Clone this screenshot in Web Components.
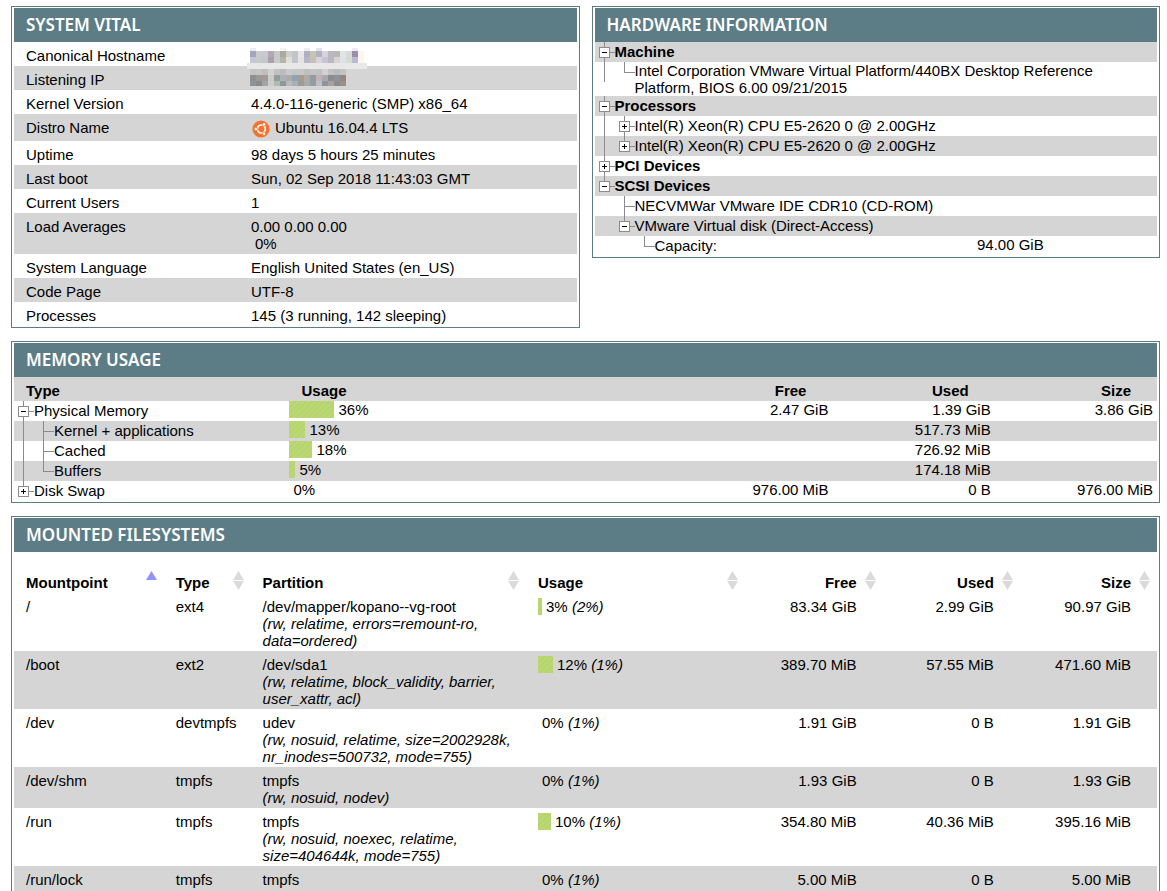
<!DOCTYPE html>
<html lang="en">
<head>
<meta charset="utf-8">
<title>System information</title>
<style>
  body {
    margin: 0;
    background: #fff;
    color: #000;
    font: 15px/17px "Liberation Sans", Arial, sans-serif;
  }
</style>
</head>
<body>
<sys-page></sys-page>

<script>
const baseStyle = `
  :host { display: block; }
  table { width: 100%; border-collapse: collapse; table-layout: fixed; }
  th, td { padding: 0; text-align: left; vertical-align: top; font-weight: normal; }
  .num { text-align: right; }
  .shade { background: #d5d5d5; }
`;

class SysPage extends HTMLElement {
  constructor() {
    super();
    this.attachShadow({mode: "open"});
    this.shadowRoot.innerHTML = `
      <style>
        :host {
          display: flex;
          flex-direction: column;
          gap: 13px;
          padding: 6px 7px 0 11px;
        }
        .top {
          display: grid;
          grid-template-columns: 1fr 1fr;
          gap: 12px;
          align-items: start;
        }
      </style>
      <div class="top">
        <info-panel><span slot="title">SYSTEM VITAL</span><vital-table></vital-table></info-panel>
        <info-panel><span slot="title">HARDWARE INFORMATION</span><hardware-table></hardware-table></info-panel>
      </div>
      <info-panel><span slot="title">MEMORY USAGE</span><memory-table></memory-table></info-panel>
      <info-panel><span slot="title">MOUNTED FILESYSTEMS</span><filesystem-table></filesystem-table></info-panel>
    `;
  }
}

class InfoPanel extends HTMLElement {
  constructor() {
    super();
    this.attachShadow({mode: "open"});
    this.shadowRoot.innerHTML = `
      <style>
        :host {
          display: block;
          border: 1px solid #5c7d86;
          padding: 1px 2px;
        }
        h2 {
          margin: 0;
          padding: 0 12px;
          background: #5c7d86;
          color: #fff;
          font: 600 17px/34px "Trebuchet MS", "Noto Sans", sans-serif;
        }
      </style>
      <h2><slot name="title"></slot></h2>
      <slot></slot>
    `;
  }
}

// Bar is 1.25px per percent, the label follows after a space
class UsageBar extends HTMLElement {
  constructor() {
    super();
    this.attachShadow({mode: "open"});
  }
  connectedCallback() {
    const value = Number(this.getAttribute("value"));
    this.shadowRoot.innerHTML = `
      <style>
        :host { display: flex; gap: 4px; }
        .bar {
          width: ${Math.round(value * 1.25)}px;
          height: 17px;
          background: repeating-linear-gradient(135deg, #b7d56e 0 2px, #bbd875 2px 4px);
        }
      </style>
      <div class="bar"></div>
      <div>${value}% <slot></slot></div>
    `;
  }
}

// One 20px step of the tree: line, blank, tee, end, open, shut, shut-last, open-last
class TreeStep extends HTMLElement {
  constructor() {
    super();
    this.attachShadow({mode: "open"});
  }
  connectedCallback() {
    const kind = this.getAttribute("kind");
    const last = kind.endsWith("-last") || kind === "end";
    const toggle = kind.startsWith("open") || kind.startsWith("shut");
    let lines = "";
    if (kind !== "blank") {
      lines += `<path d="M9.5 0V${last ? 10 : 20}"/>`;
    }
    if (kind !== "blank" && kind !== "line") {
      lines += `<path d="M9 10.5H20"/>`;
    }
    let box = "";
    if (toggle) {
      box = `<rect x="4.5" y="5.5" width="10" height="10" fill="#fff"/>
        <path stroke="#000" d="M7 10.5H12${kind.startsWith("shut") ? "M9.5 8V13" : ""}"/>`;
    }
    const svg = `<svg width="20" height="20" fill="none" stroke="#8c8c8c" aria-hidden="true">${lines}${box}</svg>`;
    this.shadowRoot.innerHTML = `
      <style>
        :host { display: block; flex: none; width: 20px; height: 20px; }
        svg { display: block; }
        button { display: block; margin: 0; padding: 0; border: 0; background: none; cursor: pointer; }
      </style>
      ${toggle ? `<button type="button" aria-label="${kind.startsWith("shut") ? "Expand" : "Collapse"}">${svg}</button>` : svg}
    `;
  }
}

class TreeLabel extends HTMLElement {
  constructor() {
    super();
    this.attachShadow({mode: "open"});
  }
  connectedCallback() {
    const steps = this.getAttribute("steps").split(" ");
    this.shadowRoot.innerHTML = `
      <style>
        :host { display: flex; align-items: flex-start; min-height: 20px; padding-right: 8px; }
        .text { display: flex; align-items: center; min-height: 19px; }
      </style>
      ${steps.map(kind => `<tree-step kind="${kind}"></tree-step>`).join("")}
      <div class="text"><slot></slot></div>
    `;
  }
}

// Mosaic that hides private values, 6px cells
class PixelMask extends HTMLElement {
  constructor() {
    super();
    this.attachShadow({mode: "open"});
  }
  connectedCallback() {
    const rows = {
      host: [
        [1, 3, "e9ebef - - - - f4f4f4 - - - ececf3 - e0e2e6 - - - - - eeeaf4"],
        [4, 6, "a3a5b8 cbcbcb c7c9ce b5a7b4 c8cac5 a9a9a0 cfcfca c1c5cb eae5e1 b0b0c4 c9c3b6 b0b4c0 d7d2dc bab6c2 bab7ae dfe5e9 d9dbd9 9c8fab fdf6ef"],
        [10, 6, "c5c6d8 c6cacb c1c8cc a8a0aa c7c9ca b3b6aa dfe1d7 c1c6cc e6e3e0 b5b6ca c9c1b5 d4d5de c8c4d1 bab8c5 d8d4d0 dde3e8 d7dcd3 b7b9d7 fdf6ef"]
      ],
      ip: [
        [-2, 6, "c3c3c3 c6c6c6 bebebe d2d2d2 c2c2c2 b8bdbf c9c9c9 c3c6c9 c7c7c5 c0bfbd c4c4c4 bec0c2 d1d1d1 c1c1c1 b9bcbf c3c3c3"],
        [4, 6, "909090 999999 a09b99 cacccb 969d99 abb3ba b0aaa5 8fa4b3 a59c92 b1a9a3 8f9ca5 c4b1b0 a4a9b2 8f8b8c 8c939d 95877e"],
        [10, 5, "8f9496 898b8d a4a4a4 cdcfce b2b9b5 8e989b b9bbb9 a6b0b7 9c9b91 a8a9aa 929ea2 bfc0c4 8f959b a6a19e 888d91 9c9187"]
      ]
    };
    const name = this.getAttribute("name");
    const cells = rows[name].map(([y, h, colors]) => colors.split(" ").map((c, i) =>
      c === "-" ? "" : `<rect x="${i * 6 - 1}" y="${y}" width="6" height="${h}" fill="#${c}"/>`
    ).join("")).join("");
    const strip = name === "host" ? `<rect x="-4" y="16" width="120" height="3" fill="#e8e8e8"/>`
      : `<rect x="-4" y="-5" width="120" height="3" fill="#e8e8e8"/>`;
    this.shadowRoot.innerHTML = `
      <style>
        :host { display: block; height: 17px; }
        svg { overflow: visible; vertical-align: top; }
      </style>
      <svg width="116" height="17" shape-rendering="crispEdges" aria-hidden="true">${strip}${cells}</svg>
    `;
  }
}

class UbuntuIcon extends HTMLElement {
  constructor() {
    super();
    this.attachShadow({mode: "open"});
    this.shadowRoot.innerHTML = `
      <style>
        :host { display: block; width: 20px; height: 20px; }
        svg { display: block; }
      </style>
      <svg width="20" height="20" aria-hidden="true">
        <circle cx="10" cy="10" r="8.6" fill="#f4722f"/>
        <circle cx="10.3" cy="10" r="4" fill="none" stroke="#fff" stroke-width="1.7"/>
        <g fill="#fff" stroke="#f4722f" stroke-width=".8">
          <circle cx="4.8" cy="10" r="1.7"/>
          <circle cx="13" cy="5.3" r="1.7"/>
          <circle cx="13" cy="14.7" r="1.7"/>
        </g>
      </svg>
    `;
  }
}

class VitalTable extends HTMLElement {
  constructor() {
    super();
    const rows = [
      ["Canonical Hostname", `<pixel-mask name="host"></pixel-mask>`],
      ["Listening IP", `<pixel-mask name="ip"></pixel-mask>`],
      ["Kernel Version", "4.4.0-116-generic (SMP) x86_64"],
      ["Distro Name", `<div class="distro"><ubuntu-icon></ubuntu-icon>Ubuntu 16.04.4 LTS</div>`],
      ["Uptime", "98 days 5 hours 25 minutes"],
      ["Last boot", "Sun, 02 Sep 2018 11:43:03 GMT"],
      ["Current Users", "1"],
      ["Load Averages", `0.00 0.00 0.00<usage-bar value="0"></usage-bar>`],
      ["System Language", "English United States (en_US)"],
      ["Code Page", "UTF-8"],
      ["Processes", "145 (3 running, 142 sleeping)"]
    ];
    this.attachShadow({mode: "open"});
    this.shadowRoot.innerHTML = `
      <style>
        ${baseStyle}
        th, td { padding: 5px 0 2px 12px; }
        th { width: 40%; box-sizing: border-box; }
        tr:nth-child(even) { background: #d5d5d5; }
        .distro { display: flex; gap: 4px; }
      </style>
      <table>
        ${rows.map(([name, value]) => `<tr><th scope="row">${name}</th><td>${value}</td></tr>`).join("")}
      </table>
    `;
  }
}

class HardwareTable extends HTMLElement {
  constructor() {
    super();
    const rows = [
      ["open", "<b>Machine</b>"],
      ["line end", "Intel Corporation VMware Virtual Platform/440BX Desktop Reference Platform, BIOS 6.00 09/21/2015"],
      ["open", "<b>Processors</b>"],
      ["line shut", "Intel(R) Xeon(R) CPU E5-2620 0 @ 2.00GHz"],
      ["line shut-last", "Intel(R) Xeon(R) CPU E5-2620 0 @ 2.00GHz"],
      ["shut", "<b>PCI Devices</b>"],
      ["open-last", "<b>SCSI Devices</b>"],
      ["blank tee", "NECVMWar VMware IDE CDR10 (CD-ROM)"],
      ["blank open-last", "VMware Virtual disk (Direct-Access)"],
      ["blank blank end", "Capacity:", "94.00 GiB"]
    ];
    this.attachShadow({mode: "open"});
    this.shadowRoot.innerHTML = `
      <style>
        ${baseStyle}
        col:first-child { width: 68%; }
        tr:nth-child(odd) { background: #d5d5d5; }
      </style>
      <table>
        <colgroup><col><col></colgroup>
        ${rows.map(([steps, name, value]) => `<tr>
          <td ${value ? "" : `colspan="2"`}><tree-label steps="${steps}">${name}</tree-label></td>
          ${value ? `<td>${value}</td>` : ""}
        </tr>`).join("")}
      </table>
    `;
  }
}

class MemoryTable extends HTMLElement {
  constructor() {
    super();
    const rows = [
      ["open", "Physical Memory", 36, "2.47 GiB", "1.39 GiB", "3.86 GiB"],
      ["line tee", "Kernel + applications", 13, "", "517.73 MiB", ""],
      ["line tee", "Cached", 18, "", "726.92 MiB", ""],
      ["line end", "Buffers", 5, "", "174.18 MiB", ""],
      ["shut-last", "Disk Swap", 0, "976.00 MiB", "0 B", "976.00 MiB"]
    ];
    this.attachShadow({mode: "open"});
    this.shadowRoot.innerHTML = `
      <style>
        ${baseStyle}
        th { padding: 5px 26px 2px 12px; font-weight: bold; }
        th.num { text-align: right; }
        td.num { padding-right: 4px; }
        tbody tr:nth-child(even) { background: #d5d5d5; }
      </style>
      <table>
        <colgroup>
          <col style="width: 24.1%"><col>
          <col style="width: 14.2%"><col style="width: 14.2%"><col style="width: 14.2%">
        </colgroup>
        <thead>
          <tr class="shade"><th>Type</th><th>Usage</th><th class="num">Free</th><th class="num">Used</th><th class="num">Size</th></tr>
        </thead>
        <tbody>
          ${rows.map(([steps, name, usage, ...sizes]) => `<tr>
            <td><tree-label steps="${steps}">${name}</tree-label></td>
            <td><usage-bar value="${usage}"></usage-bar></td>
            ${sizes.map(size => `<td class="num">${size}</td>`).join("")}
          </tr>`).join("")}
        </tbody>
      </table>
    `;
  }
}

class SortButton extends HTMLElement {
  constructor() {
    super();
    this.attachShadow({mode: "open"});
  }
  connectedCallback() {
    const arrows = this.hasAttribute("asc")
      ? `<path fill="#8f94fa" d="M9.5 0L15 9H4z"/>`
      : `<path fill="#dadada" d="M9.5 0L15 9H4zM4 10H15L9.5 19z"/>`;
    this.shadowRoot.innerHTML = `
      <style>
        :host { display: block; }
        button {
          display: flex;
          justify-content: space-between;
          align-items: flex-end;
          width: 100%;
          margin: 0;
          padding: 0;
          border: 0;
          background: none;
          color: inherit;
          font: inherit;
          cursor: pointer;
        }
        :host(.num) button { justify-content: flex-end; gap: 4px; }
        svg { flex: none; margin-bottom: 1px; }
      </style>
      <button type="button"><span><slot></slot></span><svg width="19" height="19" aria-hidden="true">${arrows}</svg></button>
    `;
  }
}

class FilesystemTable extends HTMLElement {
  constructor() {
    super();
    const rows = [
      ["/", "ext4", "/dev/mapper/kopano--vg-root", "(rw, relatime, errors=remount-ro, data=ordered)", 3, "(2%)", "83.34 GiB", "2.99 GiB", "90.97 GiB"],
      ["/boot", "ext2", "/dev/sda1", "(rw, relatime, block_validity, barrier, user_xattr, acl)", 12, "(1%)", "389.70 MiB", "57.55 MiB", "471.60 MiB"],
      ["/dev", "devtmpfs", "udev", "(rw, nosuid, relatime, size=2002928k, nr_inodes=500732, mode=755)", 0, "(1%)", "1.91 GiB", "0 B", "1.91 GiB"],
      ["/dev/shm", "tmpfs", "tmpfs", "(rw, nosuid, nodev)", 0, "(1%)", "1.93 GiB", "0 B", "1.93 GiB"],
      ["/run", "tmpfs", "tmpfs", "(rw, nosuid, noexec, relatime, size=404644k, mode=755)", 10, "(1%)", "354.80 MiB", "40.36 MiB", "395.16 MiB"],
      ["/run/lock", "tmpfs", "tmpfs", "&nbsp;", 0, "(1%)", "5.00 MiB", "0 B", "5.00 MiB"]
    ];
    this.attachShadow({mode: "open"});
    this.shadowRoot.innerHTML = `
      <style>
        ${baseStyle}
        th { padding: 19px 3px 2px 12px; font-weight: bold; }
        td { padding: 5px 12px 2px; }
        td.num { padding-right: 26px; }
        tbody tr:nth-child(even) { background: #d5d5d5; }
      </style>
      <table>
        <colgroup>
          <col style="width: 13.1%"><col style="width: 7.6%"><col style="width: 24.1%"><col style="width: 19.2%">
          <col style="width: 12%"><col style="width: 12%"><col style="width: 12%">
        </colgroup>
        <thead>
          <tr>
            <th><sort-button asc>Mountpoint</sort-button></th>
            <th><sort-button>Type</sort-button></th>
            <th><sort-button>Partition</sort-button></th>
            <th><sort-button>Usage</sort-button></th>
            <th><sort-button class="num">Free</sort-button></th>
            <th><sort-button class="num">Used</sort-button></th>
            <th><sort-button class="num">Size</sort-button></th>
          </tr>
        </thead>
        <tbody>
          ${rows.map(([mount, type, device, options, usage, inodes, ...sizes]) => `<tr>
            <td>${mount}</td>
            <td>${type}</td>
            <td>${device}<br><i>${options}</i></td>
            <td><usage-bar value="${usage}"><i>${inodes}</i></usage-bar></td>
            ${sizes.map(size => `<td class="num">${size}</td>`).join("")}
          </tr>`).join("")}
        </tbody>
      </table>
    `;
  }
}

customElements.define("sys-page", SysPage);
customElements.define("info-panel", InfoPanel);
customElements.define("usage-bar", UsageBar);
customElements.define("tree-step", TreeStep);
customElements.define("tree-label", TreeLabel);
customElements.define("pixel-mask", PixelMask);
customElements.define("ubuntu-icon", UbuntuIcon);
customElements.define("vital-table", VitalTable);
customElements.define("hardware-table", HardwareTable);
customElements.define("memory-table", MemoryTable);
customElements.define("sort-button", SortButton);
customElements.define("filesystem-table", FilesystemTable);
</script>
</body>
</html>
